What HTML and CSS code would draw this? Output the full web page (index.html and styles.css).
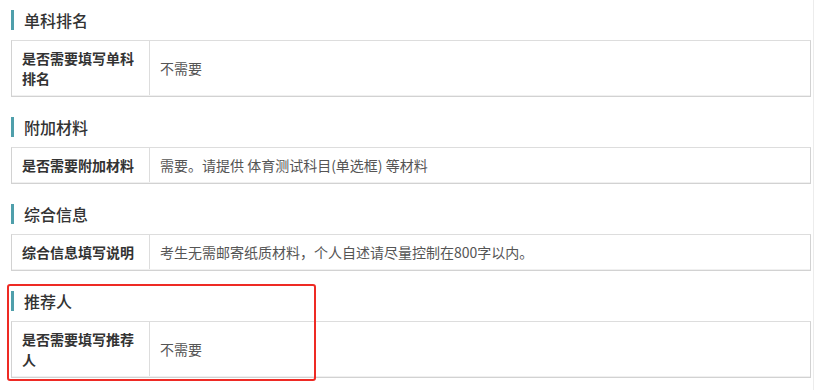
FILE: index.html
```html
<!DOCTYPE html>
<html lang="zh-CN">
<head>
<meta charset="utf-8">
<title>报名要求</title>
<link rel="stylesheet" href="styles.css">
</head>
<body>
<div class="page">
  <section class="block">
    <h2 class="block-title">单科排名</h2>
    <div class="info-table">
      <div class="info-row">
        <div class="info-label">是否需要填写单科排名</div>
        <div class="info-value">不需要</div>
      </div>
    </div>
  </section>

  <section class="block">
    <h2 class="block-title">附加材料</h2>
    <div class="info-table">
      <div class="info-row">
        <div class="info-label">是否需要附加材料</div>
        <div class="info-value">需要。请提供 体育测试科目(单选框) 等材料</div>
      </div>
    </div>
  </section>

  <section class="block">
    <h2 class="block-title">综合信息</h2>
    <div class="info-table">
      <div class="info-row">
        <div class="info-label">综合信息填写说明</div>
        <div class="info-value">考生无需邮寄纸质材料，个人自述请尽量控制在800字以内。</div>
      </div>
    </div>
  </section>

  <section class="block block-marked">
    <h2 class="block-title">推荐人</h2>
    <div class="info-table">
      <div class="info-row">
        <div class="info-label">是否需要填写推荐人</div>
        <div class="info-value">不需要</div>
      </div>
    </div>
    <span class="mark-box"></span>
  </section>
</div>
</body>
</html>
```

FILE: styles.css
```css
html, body {
  margin: 0;
  padding: 0;
  background: #ffffff;
}

body {
  font-family: "Noto Sans CJK SC", "Noto Sans", sans-serif;
  color: #333333;
}

.page {
  width: 814px;
  min-height: 390px;
  box-sizing: border-box;
  padding: 0 3px 0 11px;
  border-right: 1px solid #ececec;
}

.block {
  position: relative;
  padding-top: 20px;
}

.block:first-child {
  padding-top: 10px;
}

.block-title {
  margin: 0 0 10px 0;
  height: 20px;
  border-left: 3px solid #4f9fab;
  padding-left: 10px;
  display: flex;
  align-items: center;
  font-size: 16px;
  font-weight: 500;
  color: #333333;
  line-height: 20px;
}

.info-table {
  width: 800px;
  box-sizing: border-box;
  border: 1px solid #d2d2d2;
  border-top-color: #dddddd;
}

.info-row {
  display: grid;
  grid-template-columns: 138px 1fr;
  border-bottom: 1px solid #f0f0f0;
}

.info-label {
  padding: 7px 10px;
  font-size: 14px;
  font-weight: 700;
  line-height: 20px;
  color: #333333;
  border-right: 1px solid #dddddd;
}

.info-value {
  padding: 7px 10px;
  font-size: 14px;
  line-height: 20px;
  color: #555555;
  display: flex;
  align-items: center;
}

/* red annotation frame drawn over the last block */
.mark-box {
  position: absolute;
  left: -4px;
  top: 13px;
  width: 305px;
  height: 93px;
  border: 2px solid #ee2a24;
  border-radius: 3px;
  pointer-events: none;
}
```
